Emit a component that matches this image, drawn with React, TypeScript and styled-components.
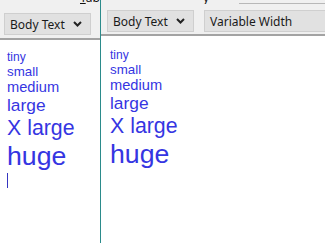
import React from 'react';
import styled, { createGlobalStyle } from 'styled-components';

const GlobalStyle = createGlobalStyle`
  html, body {
    margin: 0;
    padding: 0;
    background: #ffffff;
  }
`;

const Window = styled.div`
  display: flex;
  width: 325px;
  height: 243px;
  overflow: hidden;
  background: #ffffff;
`;

const Pane = styled.div<{ $width?: number }>`
  display: flex;
  flex-direction: column;
  flex: ${(p) => (p.$width ? `0 0 ${p.$width}px` : '1')};
  min-width: 0;
  overflow: hidden;
`;

const Divider = styled.div`
  flex: 0 0 1px;
  background: #2b8b8b;
`;

const Toolbar = styled.div<{ $height: number; $pad: number }>`
  display: flex;
  flex-direction: column;
  height: ${(p) => p.$height}px;
  background: #f0f0f0;
  border-bottom: 2px solid #a3a3a3;
  padding-left: ${(p) => p.$pad}px;
  box-sizing: content-box;
`;

// the cut-off menu bar above the toolbar: only its lowest pixels are in view
const MenuStrip = styled.div`
  height: 4px;
  overflow: hidden;
  display: flex;
  align-items: flex-end;
`;

const MenuText = styled.span<{ $left: number }>`
  margin-left: ${(p) => p.$left}px;
  font-family: 'Noto Sans', sans-serif;
  font-size: 12px;
  line-height: 12px;
  color: #111;
  margin-bottom: 0;
  white-space: nowrap;
`;

const MenuRule = styled.div<{ $left: number }>`
  margin-left: ${(p) => p.$left}px;
  flex: 1;
  height: 1px;
  margin-bottom: 0;
  background: #b8b8b8;
`;

const Controls = styled.div<{ $top: number }>`
  display: flex;
  gap: 10px;
  align-items: center;
  margin-top: ${(p) => p.$top}px;
`;

const Select = styled.div<{ $width: number }>`
  display: flex;
  align-items: center;
  justify-content: space-between;
  flex: 0 0 auto;
  width: ${(p) => p.$width}px;
  height: 22px;
  box-sizing: border-box;
  padding: 0 8px 0 5px;
  background: #e1e1e1;
  border: 1px solid #cfcfcf;
  font-family: 'Noto Sans', 'DejaVu Sans', sans-serif;
  font-size: 12px;
  color: #1a1a1a;
  white-space: nowrap;
`;

const Chevron = () => (
  <svg width="9" height="6" viewBox="0 0 9 6">
    <polyline points="1,1 4.5,4.5 8,1" fill="none" stroke="#222" strokeWidth="2" />
  </svg>
);

const Content = styled.div<{ $top: number; $left: number }>`
  padding: ${(p) => p.$top}px 0 0 ${(p) => p.$left}px;
  font-family: 'Liberation Sans', Arial, sans-serif;
  color: #3535e2;
`;

const Line = styled.div<{ $size: number }>`
  font-size: ${(p) => p.$size}px;
  line-height: normal;
  white-space: nowrap;
`;

const Caret = styled.div`
  width: 1px;
  height: 15px;
  margin-top: 1px;
  background: #3535c0;
`;

const sizes: [string, number][] = [
  ['tiny', 12],
  ['small', 13.33],
  ['medium', 14.67],
  ['large', 17.33],
  ['X large', 21.33],
  ['huge', 26.67],
];

const Sample: React.FC<{ caret?: boolean }> = ({ caret }) => (
  <>
    {sizes.map(([label, size]) => (
      <Line key={label} $size={size}>
        {label}
      </Line>
    ))}
    {caret && <Caret />}
  </>
);

export default function App() {
  return (
    <>
      <GlobalStyle />
      <Window>
        <Pane $width={100}>
          <Toolbar $height={38} $pad={4}>
            <MenuStrip>
              <MenuText $left={76}>
                <u>T</u>ab
              </MenuText>
            </MenuStrip>
            <Controls $top={9}>
              <Select $width={87}>
                Body Text
                <Chevron />
              </Select>
            </Controls>
          </Toolbar>
          <Content $top={10} $left={7}>
            <Sample caret />
          </Content>
        </Pane>
        <Divider />
        <Pane>
          <Toolbar $height={34} $pad={6}>
            <MenuStrip>
              <MenuText $left={96}>y</MenuText>
              <MenuRule $left={30} />
            </MenuStrip>
            <Controls $top={6}>
              <Select $width={87}>
                Body Text
                <Chevron />
              </Select>
              <Select $width={140}>Variable Width</Select>
            </Controls>
          </Toolbar>
          <Content $top={12} $left={9}>
            <Sample />
          </Content>
        </Pane>
      </Window>
    </>
  );
}
